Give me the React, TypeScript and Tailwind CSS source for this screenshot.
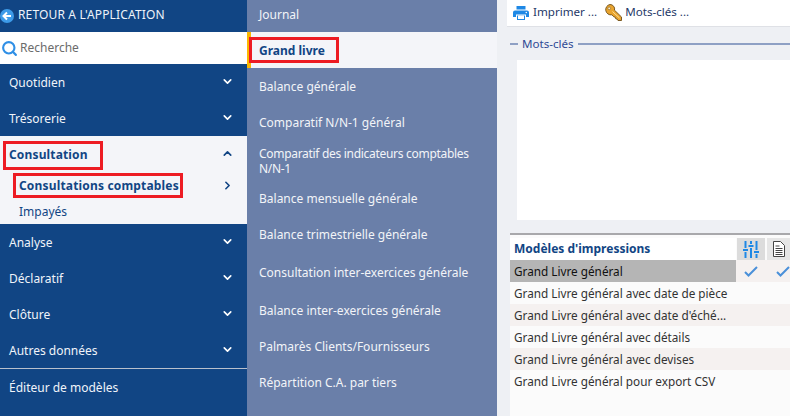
import { ChevronDown, ChevronRight, ChevronUp, Search } from 'lucide-react';

const TOP_ITEMS = ['Quotidien', 'Trésorerie'];
const BOTTOM_ITEMS = ['Analyse', 'Déclaratif', 'Clôture', 'Autres données'];

const SUB_ITEMS = [
  { label: 'Journal', cls: 'h-8 pb-[4px]' },
  { label: 'Grand livre', cls: 'h-9 pt-[2px]', active: true },
  { label: 'Balance générale', cls: 'h-9' },
  { label: 'Comparatif N/N-1 général', cls: 'h-9' },
  { label: 'Comparatif des indicateurs comptables N/N-1', cls: 'h-10 pt-[2px] tracking-[-0.3px]' },
  { label: 'Balance mensuelle générale', cls: 'h-9' },
  { label: 'Balance trimestrielle générale', cls: 'h-9' },
  { label: 'Consultation inter-exercices générale', cls: 'h-10' },
  { label: 'Balance inter-exercices générale', cls: 'h-9' },
  { label: 'Palmarès Clients/Fournisseurs', cls: 'h-9' },
  { label: 'Répartition C.A. par tiers', cls: 'h-9' },
];

const MODELS = [
  'Grand Livre général',
  'Grand Livre général avec date de pièce',
  "Grand Livre général avec date d'éché...",
  'Grand Livre général avec détails',
  'Grand Livre général avec devises',
  'Grand Livre général pour export CSV',
];

function NavRow({ label }: { label: string }) {
  return (
    <div className="flex h-9 items-center justify-between pl-[9px] pr-[13px] text-[#f0f4fa]">
      <span className="mt-[2px]">{label}</span>
      <ChevronDown className="mb-[2px] h-[13px] w-[13px] text-white" strokeWidth={3} />
    </div>
  );
}

function Check() {
  return (
    <svg width="14" height="12" viewBox="0 0 14 12" fill="none">
      <path d="M1 7l3.500 3.500L13 2" stroke="#4a90d9" strokeWidth="2" />
    </svg>
  );
}

function SlidersIcon() {
  return (
    <svg width="16" height="17" viewBox="0 0 16 17" fill="none" stroke="#1e88e5" strokeWidth="2">
      <path d="M2.500 0v7M2.500 11v6M8 0v3M8 7v10M13.500 0v9M13.500 13v4" />
      <path d="M0 9h5M5.500 5h5M11 11h5" />
    </svg>
  );
}

function DocIcon() {
  return (
    <svg width="12" height="16" viewBox="0 0 12 16" fill="#fff" stroke="#444" strokeWidth="1">
      <path d="M.5.5h7l4 4v11H.5z" />
      <path d="M2.500 5h4M2.500 7.500h7M2.500 9.500h7M2.500 11.500h7M2.500 13.500h7" />
    </svg>
  );
}

function PrinterIcon() {
  return (
    <svg width="16" height="14" viewBox="0 0 16 14">
      <path d="M3.500 0h9v3.500h-9z" fill="#1e88e5" />
      <path d="M2 4.500h12a2 2 0 0 1 2 2V11h-3v-2.500H3V11H0V6.500a2 2 0 0 1 2-2z" fill="#1e88e5" />
      <path d="M4 9.500h8V14H4z" fill="#1e88e5" />
      <path d="M5 9.500h6V13H5z" fill="#fff" />
      <circle cx="13.300" cy="6.500" r=".8" fill="#fff" />
    </svg>
  );
}

function KeyIcon() {
  return (
    <svg width="17" height="17" viewBox="0 0 17 17">
      <path d="M5 .5a4.600 4.600 0 0 1 4.500 5.700l7 6.800v3.500h-3.500l-1-1.500-1.300-.3-.4-1.500-1.500-.4-1.900-2A4.600 4.600 0 1 1 5 .5z" fill="#e8a32e" stroke="#7c5a22" strokeWidth="1" />
      <circle cx="4.200" cy="4.400" r="1.300" fill="#fff1c9" stroke="#7c5a22" strokeWidth=".6" />
      <path d="M7.500 7.500l7 6.500" stroke="#ffdf94" strokeWidth="1" />
    </svg>
  );
}

function BackIcon() {
  return (
    <svg width="14" height="14" viewBox="0 0 14 14">
      <circle cx="7" cy="7" r="7" fill="#3d9be9" />
      <path d="M11 7H4M7 3.500 3.500 7 7 10.500" stroke="#fff" strokeWidth="2" fill="none" />
    </svg>
  );
}

export default function App() {
  return (
    <div className="relative flex h-[416px] w-[790px] overflow-hidden bg-[#eef0f4] font-['Noto_Sans',sans-serif] text-[12px]">
      <aside className="flex w-[247px] shrink-0 flex-col bg-[#114584]">
        <div className="flex h-8 items-center gap-[4px] text-[#eef3fa]">
          <BackIcon />
          <span className="mb-[2px] tracking-[0.15px]">RETOUR A L'APPLICATION</span>
        </div>
        <div className="flex h-8 items-center gap-[2px] bg-white pl-[1px] text-[#6b6b6b]">
          <Search className="h-[17px] w-[17px] text-[#2f8fe6]" strokeWidth={3} />
          <span>Recherche</span>
        </div>
        {TOP_ITEMS.map((item) => (
          <NavRow key={item} label={item} />
        ))}
        <div className="flex h-[88px] flex-col bg-[#f4f5f9] text-[#114584]">
          <div className="flex h-9 items-center justify-between pl-[9px] pr-[13px] font-bold tracking-[0.15px]">
            <span className="mt-[2px]">Consultation</span>
            <ChevronUp className="mb-[2px] h-[13px] w-[13px]" strokeWidth={3} />
          </div>
          <div className="flex h-[26px] items-center justify-between pl-[19px] pr-[13px] font-bold tracking-[0.17px]">
            <span className="mt-[2px]">Consultations comptables</span>
            <ChevronRight className="h-[13px] w-[13px]" strokeWidth={3} />
          </div>
          <div className="pl-[19px] pt-[5px]">Impayés</div>
        </div>
        {BOTTOM_ITEMS.map((item) => (
          <NavRow key={item} label={item} />
        ))}
        <div className="flex h-9 items-center border-t border-[#b9c0cc] pl-[9px] text-[#f0f4fa]">
          <span className="mt-[2px]">Éditeur de modèles</span>
        </div>
      </aside>

      <nav className="w-[250px] shrink-0 bg-[#6a7fa9] text-[#f2f4f8]">
        {SUB_ITEMS.map((item) => (
          <div
            key={item.label}
            className={
              item.active
                ? `flex items-center border-l-[4px] border-[#fbb700] bg-[#f4f5f9] pl-[8px] font-bold text-[#114584] ${item.cls}`
                : `flex items-center pl-[12px] pr-[10px] leading-[15px] ${item.cls}`
            }
          >
            {item.label}
          </div>
        ))}
      </nav>

      <main className="flex min-w-0 flex-1 flex-col">
        <div className="ml-[10px] flex h-[27px] shrink-0 items-center border-b border-[#dfe1e6] bg-white pl-[6px] text-[#1f3a68]">
          <PrinterIcon />
          <span className="mb-[2px] ml-[4px] text-[11.6px]">Imprimer ...</span>
          <span className="mb-[2px] ml-[8px]"><KeyIcon /></span>
          <span className="mb-[2px] ml-[3px] text-[11.6px]">Mots-clés ...</span>
        </div>
        <div className="ml-[13px] mt-[8px] flex h-[18px] shrink-0 items-center text-[#2f4a94]">
          <div className="h-[2px] w-[8px] bg-[#8ea0c4]" />
          <span className="mx-[4px] text-[11.6px]">Mots-clés</span>
          <div className="h-[2px] flex-1 bg-[#8ea0c4]" />
        </div>
        <div className="ml-[20px] mt-[7px] h-[160px] shrink-0 bg-white" />
        <div className="ml-[13px] mt-[13px] flex flex-1 flex-col border-t-[2px] border-[#a8a8ab] bg-[#fbfbfb]">
          <div className="mt-[3px] flex h-[22px] shrink-0">
            <div className="flex w-[226px] items-center bg-white pl-[4px] font-bold text-[#114584]">Modèles d'impressions</div>
            <div className="ml-[1px] flex w-[28px] items-center justify-center bg-[#dcdcdc]"><SlidersIcon /></div>
            <div className="ml-[2px] flex flex-1 items-center justify-center bg-[#e6e6e6]"><DocIcon /></div>
          </div>
          {MODELS.map((model, i) => (
            <div key={model} className={`flex h-[22px] shrink-0 items-center text-[11.75px] ${i % 2 === 1 ? 'bg-[#fbfbfb]' : 'bg-[#f5f1f0]'}`}>
              <div className={`flex h-full w-[226px] items-center pl-[4px] pt-[2px] ${i === 0 ? 'bg-[#b5b5b5] text-[#111]' : 'text-[#333]'}`}>{model}</div>
              {i === 0 && (
                <div className="flex flex-1 items-center">
                  <span className="ml-[8px]"><Check /></span>
                  <span className="ml-[18px]"><Check /></span>
                </div>
              )}
            </div>
          ))}
        </div>
      </main>

      {/* red annotation boxes drawn over the capture */}
      <div className="absolute left-[3px] top-[141px] h-[29px] w-[100px] border-[3px] border-[#ed1c24]" />
      <div className="absolute left-[13px] top-[173px] h-[25px] w-[170px] border-[3px] border-[#ed1c24]" />
      <div className="absolute left-[249px] top-[37px] h-[26px] w-[90px] border-[3px] border-[#ed1c24]" />
    </div>
  );
}
